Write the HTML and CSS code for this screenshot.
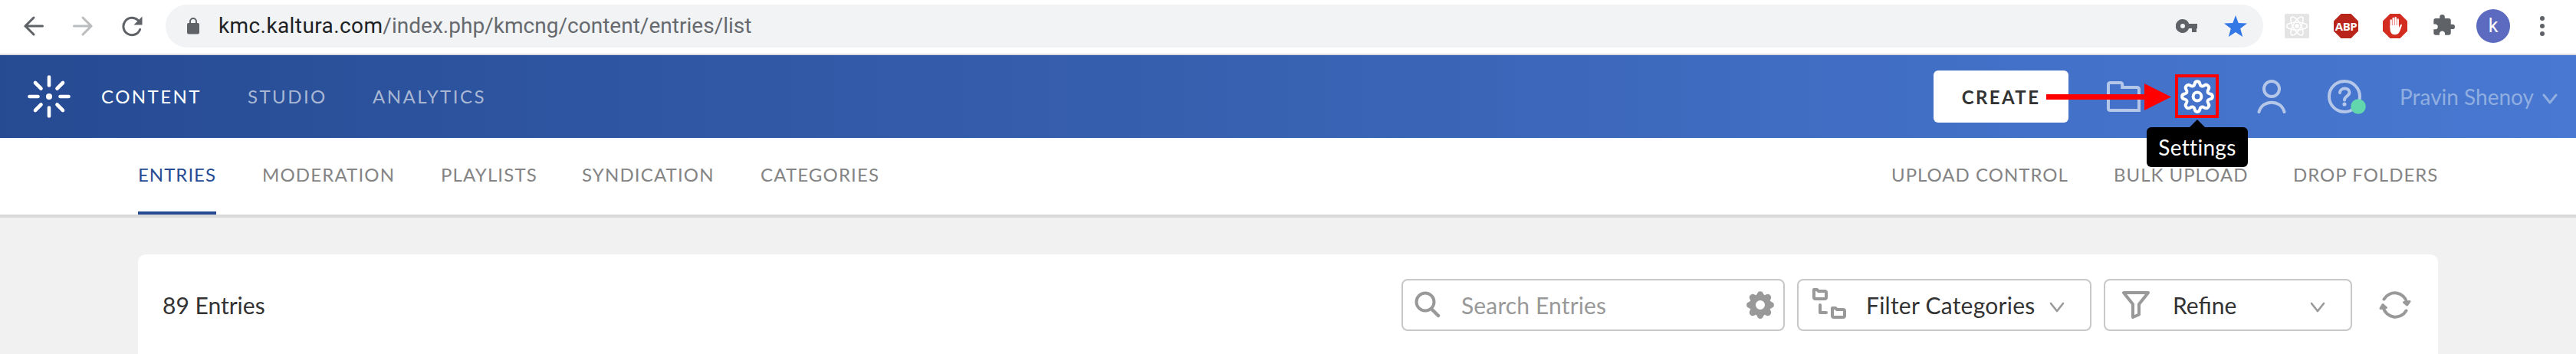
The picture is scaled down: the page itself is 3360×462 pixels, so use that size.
FILE: index.html
```html
<!DOCTYPE html>
<html lang="en">
<head>
<meta charset="utf-8">
<title>Kaltura Management Console</title>
<link rel="stylesheet" href="styles.css">
</head>
<body>
<div class="browser-bar">
  <svg class="ic back" width="28" height="28" viewBox="0 0 28 28"><path d="M25.500 14H3M14 3L3 14l11 11" fill="none" stroke="#5f6368" stroke-width="3" stroke-linecap="round"/></svg>
  <svg class="ic forward" width="28" height="28" viewBox="0 0 28 28"><path d="M2.500 14H25M14 3l11 11-11 11" fill="none" stroke="#babcbe" stroke-width="3" stroke-linecap="round"/></svg>
  <svg class="ic reload" width="28" height="28" viewBox="0 0 28 28"><path d="M24.600 18.500A11.200 11.200 0 1 1 22 6.500" fill="none" stroke="#5f6368" stroke-width="3" stroke-linecap="round"/><path d="M27.500 1.500V12.500H16.500z" fill="#5f6368"/></svg>
  <div class="omnibox">
    <svg class="lock" width="16" height="22" viewBox="0 0 16 22"><rect y="7" width="16" height="14.500" rx="2" fill="#5f6368"/><path d="M4 8V5a4 4 0 0 1 8 0v3" fill="none" stroke="#5f6368" stroke-width="2"/></svg>
    <div class="url"><span class="host">kmc.kaltura.com</span>/index.php/kmcng/content/entries/list</div>
    <svg class="key" width="28" height="18" viewBox="0 0 28 18"><path fill-rule="evenodd" d="M9 0a9 9 0 1 0 8.200 12H21v5h6v-5h1V6H17.200A9 9 0 0 0 9 0zm0 6a3 3 0 1 1 0 6 3 3 0 0 1 0-6z" fill="#5f6368"/></svg>
    <svg class="star" width="30" height="28" viewBox="0 0 30 28"><path d="M15 0l3.700 10L30 10.600l-8.800 6.700L24.200 28 15 21.900 5.800 28l3-10.700L0 10.600 11.300 10z" fill="#3478e5"/></svg>
  </div>
  <svg class="ext" width="32" height="32" viewBox="0 0 32 32"><rect width="32" height="32" rx="2" fill="#e4e4e4"/><g fill="none" stroke="#fff" stroke-width="1.600"><ellipse cx="16" cy="16" rx="13.500" ry="5"/><ellipse cx="16" cy="16" rx="13.500" ry="5" transform="rotate(60 16 16)"/><ellipse cx="16" cy="16" rx="13.500" ry="5" transform="rotate(120 16 16)"/></g><circle cx="16" cy="16" r="2.800" fill="#fff"/></svg>
  <div class="ext abp">
    <svg width="32" height="32" viewBox="0 0 32 32"><path d="M9.500 0h13L32 9.500v13L22.500 32h-13L0 22.500v-13z" fill="#b9251b"/></svg>
    <span>ABP</span>
  </div>
  <svg class="ext" width="32" height="32" viewBox="0 0 32 32"><path d="M9.500 0h13L32 9.500v13L22.500 32h-13L0 22.500v-13z" fill="#d32d22"/><g stroke="#fff" stroke-width="2.400" stroke-linecap="round"><path d="M10.700 8.500v9M13.700 6v11M16.700 5.200v11M19.700 7.500v10"/></g><path d="M9.500 15h11.400v3.500l2-4c.8-1.400 2.400-1 2 .6-1 3.500-2 6.500-3.400 8.900-2 4-8.500 4-10.500 1.200C9.700 23 9.500 21 9.500 18z" fill="#fff"/></svg>
  <svg class="puzzle" width="29" height="28" viewBox="1 1 22 22" preserveAspectRatio="none"><path d="M20.500 11H19V7c0-1.100-.9-2-2-2h-4V3.500a2.500 2.500 0 0 0-5 0V5H4c-1.100 0-1.990.9-1.990 2v3.800H3.500c1.490 0 2.700 1.210 2.700 2.700s-1.210 2.700-2.700 2.700H2V20c0 1.100.9 2 2 2h3.800v-1.500c0-1.490 1.210-2.700 2.700-2.700s2.700 1.210 2.700 2.700V22H17c1.100 0 2-.9 2-2v-4h1.500a2.500 2.500 0 0 0 0-5z" fill="#5f6368"/></svg>
  <div class="avatar">k</div>
  <svg class="dots" width="6" height="28" viewBox="0 0 6 28"><g fill="#5f6368"><circle cx="3" cy="4" r="3"/><circle cx="3" cy="14" r="3"/><circle cx="3" cy="24" r="3"/></g></svg>
</div>

<div class="header">
  <svg class="logo" width="56" height="56" viewBox="0 0 56 56"><g stroke="#fff" stroke-width="4.600" stroke-linecap="round"><path d="M28 2.500v11M28 42.500v11M2.500 28h11M42.500 28h11M10 10l7.500 7.500M38.500 38.500L46 46M46 10l-7.500 7.500M17.500 38.500L10 46"/></g><circle cx="28" cy="28" r="4" fill="#fff"/></svg>
  <div class="nav">
    <span class="n1 active">CONTENT</span><span class="n2">STUDIO</span><span class="n3">ANALYTICS</span>
  </div>
  <div class="create"><span>CREATE</span></div>
  <svg class="folder" width="44" height="40" viewBox="0 0 44 40"><path d="M4.500 2h13c1.700 0 2.700 1 2.700 2.500v3.500H39c2 0 3 1 3 2.600V38H4.500C3 38 2 37 2 35.500v-31C2 3 3 2 4.500 2z" fill="none" stroke="#b4c7e9" stroke-width="4"/></svg>
  <div class="settings">
    <svg width="44" height="44" viewBox="0 0 44 44"><path d="M18.600 5.500C19.200 1 24.800 1 25.400 5.500C26 8.600 28.600 9.400 31 7.600C34.700 4.900 39 9.300 36.400 13C34.600 15.400 35.400 18 38.500 18.600C43 19.200 43 24.800 38.500 25.400C35.400 26 34.600 28.600 36.400 31C39 34.700 34.700 39 31 36.400C28.600 34.600 26 35.400 25.400 38.500C24.800 43 19.200 43 18.600 38.500C18 35.400 15.400 34.600 13 36.400C9.300 39 5 34.700 7.600 31C9.400 28.600 8.600 26 5.500 25.400C1 24.800 1 19.200 5.500 18.600C8.600 18 9.400 15.400 7.600 13C5 9.300 9.300 5 13 7.600C15.400 9.400 18 8.600 18.600 5.500z" fill="none" stroke="#fff" stroke-width="4" stroke-linejoin="round"/><circle cx="22" cy="22" r="5.400" fill="none" stroke="#fff" stroke-width="4"/></svg>
    <div class="highlight"></div>
    <svg class="pointer" width="163" height="35" viewBox="0 0 163 35"><path d="M0 14h128V0l35 17.500-35 17.500V21H0z" fill="#f00"/></svg>
    <div class="tooltip">Settings</div>
  </div>
  <svg class="user" width="38" height="44" viewBox="0 0 38 44"><g fill="none" stroke="#b4c7e9" stroke-width="4" stroke-linecap="round"><ellipse cx="19" cy="12" rx="10" ry="10"/><path d="M2.500 42C7 25.500 31 25.500 35.500 42"/></g></svg>
  <div class="help">
    <svg width="54" height="46" viewBox="0 0 54 46"><circle cx="22" cy="22" r="20" fill="none" stroke="#b4c7e9" stroke-width="4"/><path d="M16 17c0-7 12.500-7.500 12.500-.5 0 5-6.500 5-6.500 10" fill="none" stroke="#b4c7e9" stroke-width="4" stroke-linecap="round"/><circle cx="22" cy="32" r="2.600" fill="#b4c7e9"/><circle cx="40" cy="35" r="9.800" fill="#62d6ac"/></svg>
  </div>
  <div class="account">Pravin Shenoy</div>
  <svg class="chev" width="20" height="14" viewBox="0 0 20 14"><path d="M2 2l8 10 8-10" fill="none" stroke="#90aee0" stroke-width="3" stroke-linecap="round" stroke-linejoin="round"/></svg>
</div>

<div class="subnav">
  <div class="tabs">
    <span class="t1 on">ENTRIES</span><span class="t2">MODERATION</span><span class="t3">PLAYLISTS</span><span class="t4">SYNDICATION</span><span class="t5">CATEGORIES</span>
  </div>
  <div class="links">
    <span class="l1">UPLOAD CONTROL</span><span class="l2">BULK UPLOAD</span><span class="l3">DROP FOLDERS</span>
  </div>
</div>

<div class="card">
  <div class="count">89 Entries</div>
  <div class="field search">
    <svg class="mag" width="34" height="36" viewBox="0 0 34 36"><circle cx="14" cy="14" r="11.500" fill="none" stroke="#999" stroke-width="4"/><path d="M22 23l9 9" stroke="#999" stroke-width="4.500" stroke-linecap="round"/></svg>
    <span class="label muted">Search Entries</span>
    <svg class="cog" width="36" height="36" viewBox="0 0 36 36"><path fill-rule="evenodd" d="M14 3.500C14.500-1 21.500-1 22 3.500l1.500 1.800 2-.8c3.600-2.600 8.600 2.400 6 6l-.8 2 1.800 1.500c4.500.5 4.500 7.500 0 8l-1.800 1.500.8 2c2.600 3.600-2.400 8.600-6 6l-2-.8-1.500 1.800c-.5 4.500-7.500 4.500-8 0l-1.500-1.800-2 .8c-3.600 2.600-8.600-2.400-6-6l.8-2L3.500 22C-1 21.500-1 14.500 3.500 14l1.800-1.500-.8-2c-2.600-3.600 2.400-8.600 6-6l2 .8zM18 12a6 6 0 1 0 0 12 6 6 0 0 0 0-12z" fill="#999"/></svg>
  </div>
  <div class="field filter">
    <svg class="tree" width="44" height="40" viewBox="0 0 44 40"><g fill="none" stroke="#999" stroke-width="4" stroke-linejoin="round"><path d="M2 2h4l2 2h8q2 0 2 2v6q0 2-2 2H4q-2 0-2-2z"/><path d="M26 26h4l2 2h8q2 0 2 2v6q0 2-2 2H28q-2 0-2-2z"/><path d="M10 22v10h8" stroke-linecap="round"/></g></svg>
    <span class="label">Filter Categories</span>
    <svg class="chev" width="20" height="14" viewBox="0 0 20 14"><path d="M2 2l8 10 8-10" fill="none" stroke="#999" stroke-width="2.600" stroke-linecap="round" stroke-linejoin="round"/></svg>
  </div>
  <div class="field refine">
    <svg class="funnel" width="36" height="36" viewBox="0 0 36 36"><path d="M2 2h32L22 17v13.500L14 34V17z" fill="none" stroke="#999" stroke-width="4" stroke-linejoin="round"/></svg>
    <span class="label">Refine</span>
    <svg class="chev" width="20" height="14" viewBox="0 0 20 14"><path d="M2 2l8 10 8-10" fill="none" stroke="#999" stroke-width="2.600" stroke-linecap="round" stroke-linejoin="round"/></svg>
  </div>
  <svg class="refresh" width="44" height="36" viewBox="0 0 44 36"><g fill="none" stroke="#999" stroke-width="4" stroke-linecap="round"><path d="M7.500 10.500A16.300 16.300 0 0 1 37.500 15"/><path d="M36.500 25.500A16.300 16.300 0 0 1 6.500 21"/></g><g fill="#999" stroke="#999" stroke-width="3" stroke-linejoin="round"><path d="M33.500 14.500l7.500-1-3.200 4.500z"/><path d="M10.500 21.500l-7.500 1 3-5z"/></g></svg>
</div>
</body>
</html>
```
FILE: styles.css
```css
* { box-sizing: border-box; }
body { margin: 0; width: 3360px; height: 462px; overflow: hidden; background: #f1f1f1; font-family: Lato, sans-serif; color: #333; }
svg { display: block; flex: none; }
span { white-space: nowrap; }

.browser-bar { display: flex; align-items: center; height: 72px; padding: 0 0 4px 30px; background: #fff; border-bottom: 2px solid #dadce0; font-family: "Open Sans", sans-serif; }
.ic { margin-top: 1px; }
.forward { margin-left: 36px; }
.reload { margin-left: 36px; }
.omnibox { display: flex; align-items: center; width: 2736px; height: 56px; margin: 2px 0 0 30px; padding: 0 21px 0 28px; border-radius: 28px; background: #f1f3f4; }
.url { flex: 1; margin-left: 25px; font: 28px/56px Roboto, sans-serif; letter-spacing: 0.020px; color: #66696d; white-space: nowrap; }
.host { color: #202124; letter-spacing: 0.400px; }
.star { margin-left: 35px; }
.ext { margin-left: 32px; margin-top: 2px; }
.omnibox + .ext { margin-left: 28px; }
.abp { display: grid; width: 32px; height: 32px; }
.abp > * { grid-area: 1 / 1; }
.abp span { color: #fff; font: bold 15px/32px "Open Sans", sans-serif; letter-spacing: -0.500px; text-align: center; }
.puzzle { margin-left: 33px; }
.avatar { width: 44px; height: 44px; margin: 2px 0 0 28px; border-radius: 50%; background: #5c6bc0; color: #fff; font: 25px/43px Roboto, sans-serif; text-align: center; }
.dots { margin: 2px 0 0 39px; }

.header { display: flex; align-items: center; height: 108px; padding-left: 36px; background: linear-gradient(90deg, #264b93, #365fae 45%, #426fc6 75%, #4878d1); }
.nav { display: flex; flex: 1; margin-left: 40px; font-size: 24px; line-height: 30px; letter-spacing: 2.450px; color: #a8b7d4; }
.nav .active { color: #fff; }
.n1 { width: 191px; }
.n2 { width: 163px; }
.create { display: flex; align-items: center; justify-content: center; width: 176px; height: 68px; border-radius: 6px; background: #fff; font-weight: 700; font-size: 24px; letter-spacing: 2.400px; color: #333; }
.folder { margin-left: 50px; }
.settings { position: relative; margin-left: 52px; }
.highlight { position: absolute; left: -7px; top: -7px; width: 57px; height: 57px; border: 4px solid #f00; }
.pointer { position: absolute; left: -175px; top: 5px; }
.tooltip { position: absolute; z-index: 2; left: -44px; top: 62px; width: 132px; height: 52px; border-radius: 6px; background: #000; color: #fff; font-size: 28px; line-height: 52px; letter-spacing: 0.300px; text-align: center; }
.tooltip::before { content: ""; position: absolute; left: 56px; top: -10px; border: solid transparent; border-width: 0 10px 10px; border-bottom-color: #000; }
.user { margin-left: 56px; }
.help { margin-left: 54px; padding-top: 2px; }
.account { width: 172px; margin-left: 40px; font-size: 28px; color: #90aee0; white-space: nowrap; }
.header > .chev { margin: 6px 24px 0 14px; }

.subnav { display: flex; justify-content: space-between; height: 104px; padding: 0 180px; background: #fff; border-bottom: 4px solid #d9d9d9; font-size: 24px; line-height: 96px; letter-spacing: 1.150px; color: #848484; }
.tabs, .links { display: flex; }
.tabs span, .links span { height: 100px; }
.tabs .on { color: #264b93; border-bottom: 4px solid #264b93; letter-spacing: 1px; }
.t1 { width: 102px; }
.t2 { margin-left: 60px; width: 173px; }
.t3 { margin-left: 60px; width: 123px; }
.t4 { margin-left: 61px; width: 173px; }
.t5 { margin-left: 60px; }
.links { letter-spacing: 1px; }
.l1 { width: 290px; }
.l2 { width: 234px; }
.l3 { width: 189px; }

.card { display: flex; align-items: flex-start; width: 3000px; height: 140px; margin: 48px 0 0 180px; padding: 32px 34px 0 32px; border-radius: 10px 10px 0 0; background: #fff; font-size: 30px; }
.count { flex: 1; line-height: 68px; }
.field { display: flex; align-items: center; height: 68px; border: 2px solid #c8c8c8; border-radius: 8px; line-height: 64px; }
.field .label { flex: 1; }
.field .muted { color: #999; letter-spacing: 0.150px; }
.search { width: 500px; padding: 0 12px 0 15px; }
.mag { margin-right: 27px; }
.filter { width: 384px; margin-left: 16px; padding: 0 33px 0 18px; letter-spacing: 0.250px; }
.tree { margin: 0 26px 4px 0; }
.refine { width: 324px; margin-left: 16px; padding: 0 33px 0 22px; }
.funnel { margin: 0 30px 0 0; }
.field .chev { margin-top: 6px; }
.refresh { margin: 16px 0 0 34px; }
```
